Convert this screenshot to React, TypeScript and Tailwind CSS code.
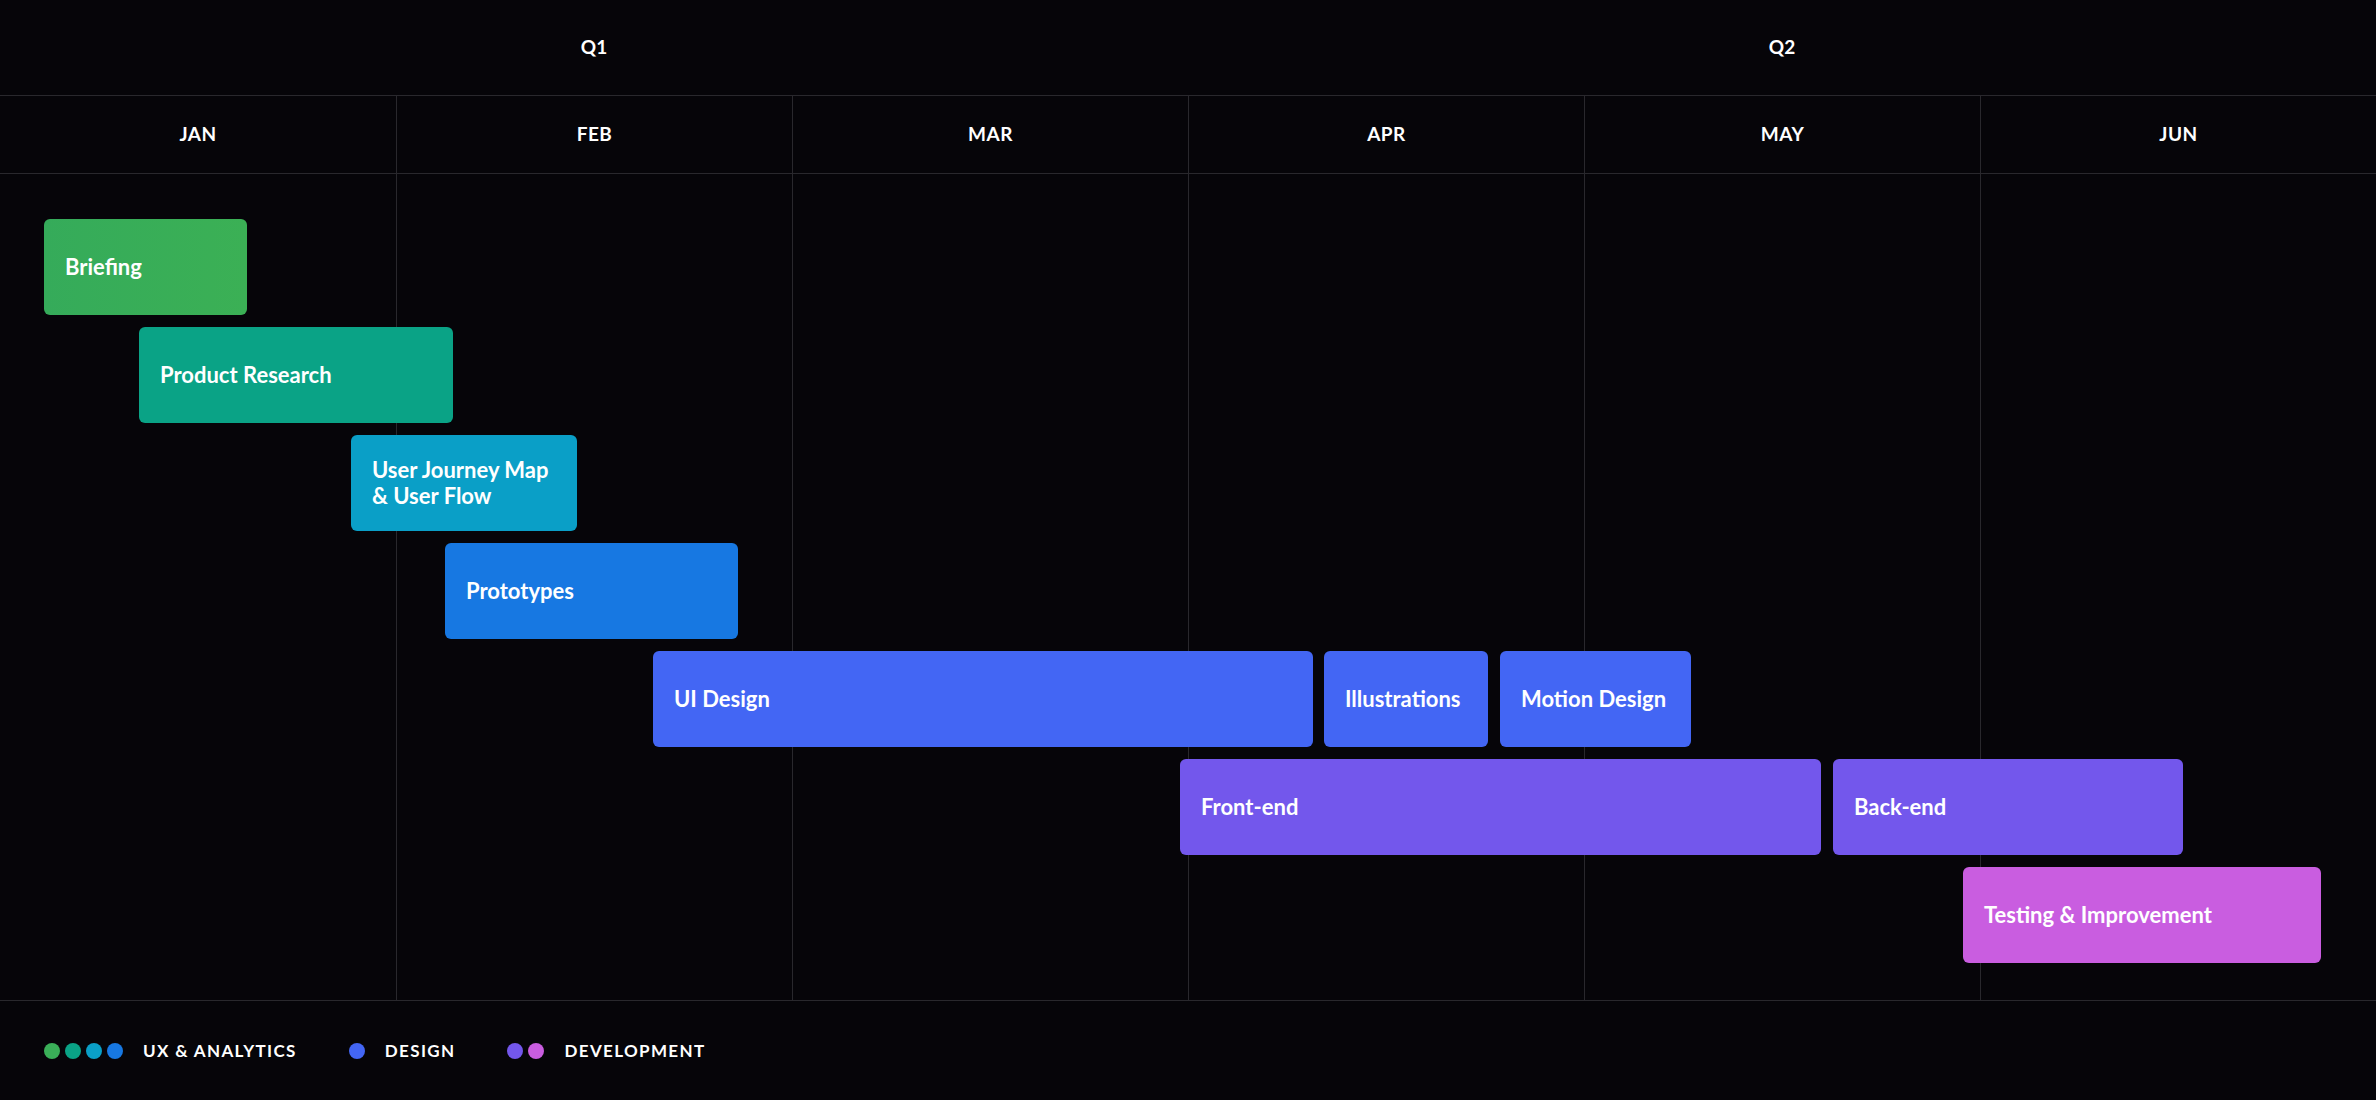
// Roadmap Gantt chart: quarters, months, task bars and a legend

const MONTHS = ['JAN', 'FEB', 'MAR', 'APR', 'MAY', 'JUN']

interface Task {
  label: string[]
  left: number
  width: number
  row: number
  color: string
}

const TASKS: Task[] = [
  { label: ['Briefing'], left: 44, width: 203, row: 0, color: 'bg-gradient-to-r from-[#35ab5a] to-[#3bb055]' },
  { label: ['Product Research'], left: 139, width: 314, row: 1, color: 'bg-[#0aa386]' },
  { label: ['User Journey Map', '& User Flow'], left: 351, width: 226, row: 2, color: 'bg-[#0a9fc7]' },
  { label: ['Prototypes'], left: 445, width: 293, row: 3, color: 'bg-[#1778e2]' },
  { label: ['UI Design'], left: 653, width: 660, row: 4, color: 'bg-[#4366f4]' },
  { label: ['Illustrations'], left: 1324, width: 164, row: 4, color: 'bg-[#4366f4]' },
  { label: ['Motion Design'], left: 1500, width: 191, row: 4, color: 'bg-[#4366f4]' },
  { label: ['Front-end'], left: 1180, width: 641, row: 5, color: 'bg-[#7357ec]' },
  { label: ['Back-end'], left: 1833, width: 350, row: 5, color: 'bg-[#7357ec]' },
  { label: ['Testing & Improvement'], left: 1963, width: 358, row: 6, color: 'bg-[#c95de0]' },
]

const ROW_TOP = 45
const ROW_PITCH = 108

function Dot({ color }: { color: string }) {
  return <span className={`w-4 h-4 rounded-full ${color}`} />
}

export default function App() {
  return (
    <div
      className="w-[2376px] h-[1100px] bg-[#060509] text-white flex flex-col overflow-hidden"
      style={{ fontFamily: 'Lato, "Open Sans", sans-serif' }}
    >
      {/* Quarters */}
      <div className="h-[96px] grid grid-cols-2 border-b border-[#29282d] shrink-0">
        <div className="flex items-center justify-center text-[19px] font-bold">Q1</div>
        <div className="flex items-center justify-center text-[19px] font-bold">Q2</div>
      </div>

      {/* Months */}
      <div className="h-[78px] grid grid-cols-6 border-b border-[#29282d] shrink-0">
        {MONTHS.map((m, i) => (
          <div
            key={m}
            className={`flex items-center justify-center text-[19px] font-bold tracking-wide ${i > 0 ? 'border-l border-[#29282d]' : ''}`}
          >
            {m}
          </div>
        ))}
      </div>

      {/* Body */}
      <div className="relative h-[827px] shrink-0 border-b border-[#29282d]">
        <div className="absolute inset-0 grid grid-cols-6">
          {MONTHS.map((m, i) => (
            <div key={m} className={i > 0 ? 'border-l border-[#29282d]' : ''} />
          ))}
        </div>
        {TASKS.map((t) => (
          <div
            key={t.label.join(' ')}
            className={`absolute h-[96px] rounded-[6px] flex flex-col justify-center pl-[21px] text-[22px] font-bold leading-[26px] ${t.color}`}
            style={{ left: t.left, width: t.width, top: ROW_TOP + t.row * ROW_PITCH }}
          >
            {t.label.map((l) => (
              <span key={l}>{l}</span>
            ))}
          </div>
        ))}
      </div>

      {/* Legend */}
      <div className="flex-1 flex items-center pl-[44px] gap-[52px] text-[17px] font-bold tracking-[0.08em]">
        <div className="flex items-center gap-[20px]">
          <div className="flex gap-[5px]">
            <Dot color="bg-[#3aaf58]" />
            <Dot color="bg-[#0aa386]" />
            <Dot color="bg-[#0a9fc7]" />
            <Dot color="bg-[#1778e2]" />
          </div>
          <span>UX &amp; ANALYTICS</span>
        </div>
        <div className="flex items-center gap-[20px]">
          <Dot color="bg-[#4366f4]" />
          <span>DESIGN</span>
        </div>
        <div className="flex items-center gap-[20px]">
          <div className="flex gap-[5px]">
            <Dot color="bg-[#7357ec]" />
            <Dot color="bg-[#c95de0]" />
          </div>
          <span>DEVELOPMENT</span>
        </div>
      </div>
    </div>
  )
}
